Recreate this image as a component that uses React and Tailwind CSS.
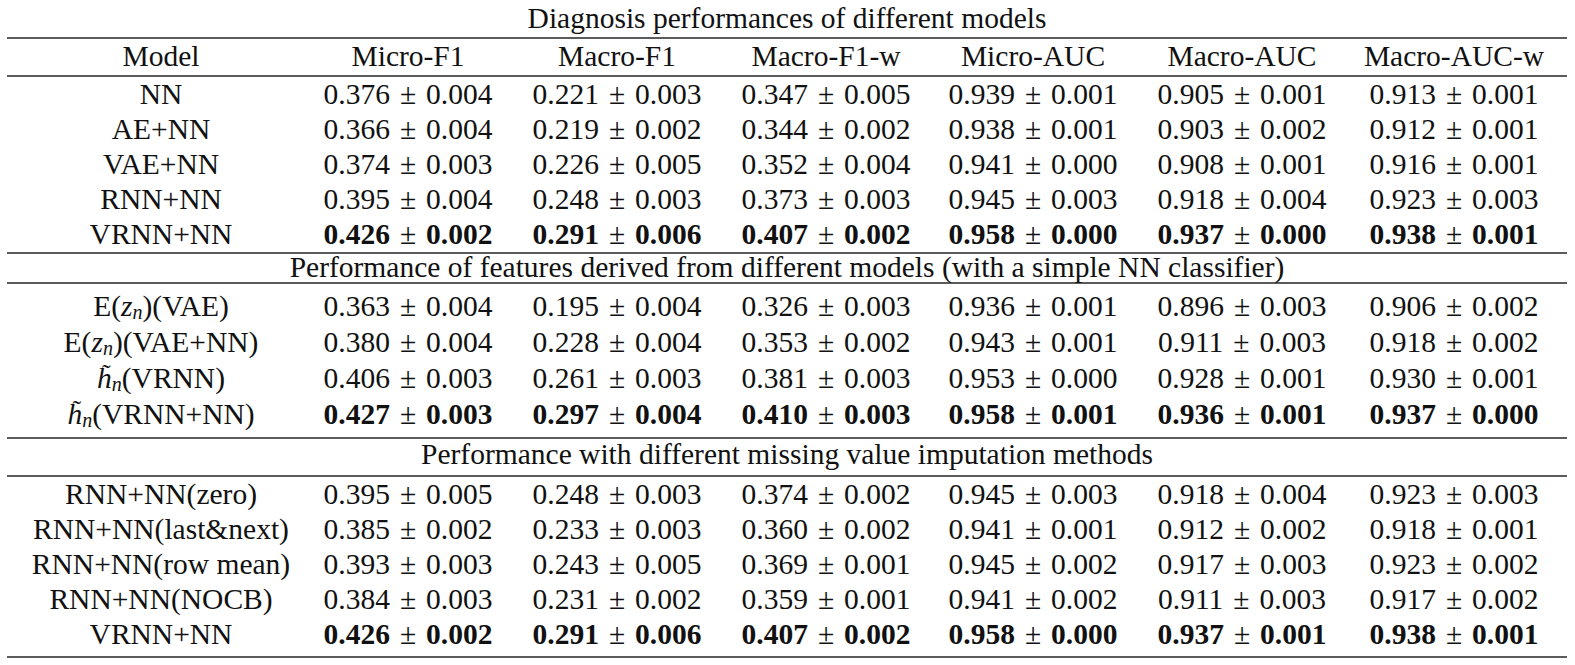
import React from "react";

const COLS = ["w-[308px]", "w-[186px]", "w-[232px]", "w-[186px]", "w-[228px]", "w-[190px]", "w-[234px]"];
const HEADS = ["Model", "Micro-F1", "Macro-F1", "Macro-F1-w", "Micro-AUC", "Macro-AUC", "Macro-AUC-w"];

const diag = [
  ["NN", "0.376 0.004", "0.221 0.003", "0.347 0.005", "0.939 0.001", "0.905 0.001", "0.913 0.001"],
  ["AE+NN", "0.366 0.004", "0.219 0.002", "0.344 0.002", "0.938 0.001", "0.903 0.002", "0.912 0.001"],
  ["VAE+NN", "0.374 0.003", "0.226 0.005", "0.352 0.004", "0.941 0.000", "0.908 0.001", "0.916 0.001"],
  ["RNN+NN", "0.395 0.004", "0.248 0.003", "0.373 0.003", "0.945 0.003", "0.918 0.004", "0.923 0.003"],
  ["VRNN+NN", "0.426 0.002", "0.291 0.006", "0.407 0.002", "0.958 0.000", "0.937 0.000", "0.938 0.001", true],
];

const feats = [
  ["ez:VAE", "0.363 0.004", "0.195 0.004", "0.326 0.003", "0.936 0.001", "0.896 0.003", "0.906 0.002"],
  ["ez:VAE+NN", "0.380 0.004", "0.228 0.004", "0.353 0.002", "0.943 0.001", "0.911 0.003", "0.918 0.002"],
  ["h:VRNN", "0.406 0.003", "0.261 0.003", "0.381 0.003", "0.953 0.000", "0.928 0.001", "0.930 0.001"],
  ["h:VRNN+NN", "0.427 0.003", "0.297 0.004", "0.410 0.003", "0.958 0.001", "0.936 0.001", "0.937 0.000", true],
];

const imput = [
  ["RNN+NN(zero)", "0.395 0.005", "0.248 0.003", "0.374 0.002", "0.945 0.003", "0.918 0.004", "0.923 0.003"],
  ["RNN+NN(last&next)", "0.385 0.002", "0.233 0.003", "0.360 0.002", "0.941 0.001", "0.912 0.002", "0.918 0.001"],
  ["RNN+NN(row mean)", "0.393 0.003", "0.243 0.005", "0.369 0.001", "0.945 0.002", "0.917 0.003", "0.923 0.002"],
  ["RNN+NN(NOCB)", "0.384 0.003", "0.231 0.002", "0.359 0.001", "0.941 0.002", "0.911 0.003", "0.917 0.002"],
  ["VRNN+NN", "0.426 0.002", "0.291 0.006", "0.407 0.002", "0.958 0.000", "0.937 0.001", "0.938 0.001", true],
];

function Rule() {
  return <div className="h-[2px] w-[1560px] bg-[#5b5b5b]" />;
}

function Model({ name }) {
  if (name.startsWith("ez:")) {
    return (
      <span>
        E(<i>z</i>
        <sub className="text-[20px] italic relative top-[3px]">n</sub>)({name.slice(3)})
      </span>
    );
  }
  if (name.startsWith("h:")) {
    return (
      <span>
        <span className="relative inline-block">
          <i>h</i>
          <span className="absolute left-[5px] top-[-3px] text-[26px] leading-none">˜</span>
        </span>
        <sub className="text-[20px] italic relative top-[3px]">n</sub>({name.slice(2)})
      </span>
    );
  }
  return <span>{name}</span>;
}

function Val({ v, bold }) {
  const [a, b] = v.split(" ");
  return (
    <span className={bold ? "font-bold" : ""}>
      {a}
      <span className="font-normal mx-[10px]">±</span>
      {b}
    </span>
  );
}

function Row({ r, h }) {
  const bold = r[7];
  return (
    <div className={`flex ${h} items-center`}>
      <div className={`${COLS[0]} text-center whitespace-nowrap`}>
        <Model name={r[0]} />
      </div>
      {r.slice(1, 7).map((v, i) => (
        <div key={i} className={`${COLS[i + 1]} text-center whitespace-nowrap`}>
          <Val v={v} bold={bold} />
        </div>
      ))}
    </div>
  );
}

export default function App() {
  return (
    <div className="w-[1575px] h-[665px] bg-white text-[#111] font-['Liberation_Serif',serif] text-[29.5px] leading-none pl-[7px]">
      <div className="h-[37px] flex items-center justify-center w-[1560px] pt-[1px]">
        Diagnosis performances of different models
      </div>
      <Rule />
      <div className="flex h-[36px] items-center">
        {HEADS.map((t, i) => (
          <div key={t} className={`${COLS[i]} text-center`}>
            {t}
          </div>
        ))}
      </div>
      <Rule />
      {diag.map((r) => (
        <Row key={r[0]} r={r} h="h-[35px]" />
      ))}
      <Rule />
      <div className="h-[28px] flex items-center justify-center w-[1560px]">
        Performance of features derived from different models (with a simple NN classifier)
      </div>
      <Rule />
      <div className="pt-[5px] pb-[4px]">
        {feats.map((r) => (
          <Row key={r[0]} r={r} h="h-[36px]" />
        ))}
      </div>
      <Rule />
      <div className="h-[36px] flex items-center justify-center w-[1560px] pb-[4px]">
        Performance with different missing value imputation methods
      </div>
      <Rule />
      <div className="pb-[4px]">
        {imput.map((r, i) => (
          <Row key={i} r={r} h="h-[35px]" />
        ))}
      </div>
      <Rule />
    </div>
  );
}
